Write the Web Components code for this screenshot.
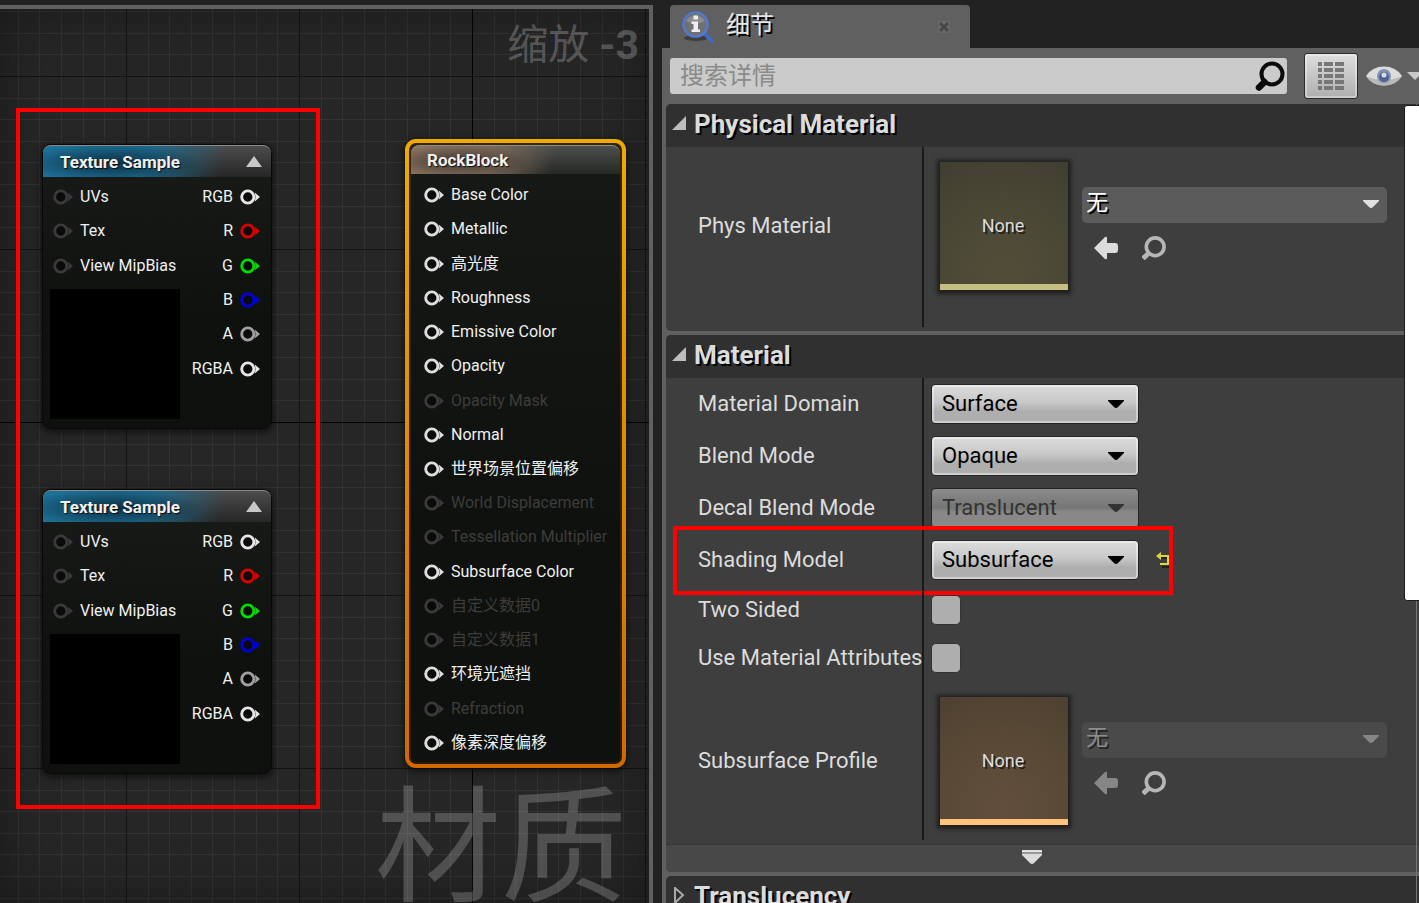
<!DOCTYPE html>
<html lang="zh-CN">
<head>
<meta charset="utf-8">
<title>材质编辑器</title>
<style>
    html, body { height: 100%; }
    body {
        margin: 0;
        overflow: hidden;
        background: #222;
        color: #dcdcdc;
        font-family: Roboto, "Noto Sans CJK SC", sans-serif;
    }
</style>
</head>
<body>
<material-editor>
    <graph-canvas slot="graph" zoom="-3" kind="材质">
        <graph-node class="first" heading="Texture Sample" preview>
            <graph-pin slot="inputs" off>UVs</graph-pin>
            <graph-pin slot="inputs" off>Tex</graph-pin>
            <graph-pin slot="inputs" off>View MipBias</graph-pin>
            <graph-pin slot="outputs" output color="#e6e6e6">RGB</graph-pin>
            <graph-pin slot="outputs" output color="#dc0000">R</graph-pin>
            <graph-pin slot="outputs" output color="#00dc00">G</graph-pin>
            <graph-pin slot="outputs" output color="#0000dc">B</graph-pin>
            <graph-pin slot="outputs" output color="#a0a0a0">A</graph-pin>
            <graph-pin slot="outputs" output color="#e6e6e6">RGBA</graph-pin>
        </graph-node>
        <graph-node class="second" heading="Texture Sample" preview>
            <graph-pin slot="inputs" off>UVs</graph-pin>
            <graph-pin slot="inputs" off>Tex</graph-pin>
            <graph-pin slot="inputs" off>View MipBias</graph-pin>
            <graph-pin slot="outputs" output color="#e6e6e6">RGB</graph-pin>
            <graph-pin slot="outputs" output color="#dc0000">R</graph-pin>
            <graph-pin slot="outputs" output color="#00dc00">G</graph-pin>
            <graph-pin slot="outputs" output color="#0000dc">B</graph-pin>
            <graph-pin slot="outputs" output color="#a0a0a0">A</graph-pin>
            <graph-pin slot="outputs" output color="#e6e6e6">RGBA</graph-pin>
        </graph-node>
        <graph-node class="result" heading="RockBlock" selected>
            <graph-pin slot="inputs">Base Color</graph-pin>
            <graph-pin slot="inputs">Metallic</graph-pin>
            <graph-pin slot="inputs">高光度</graph-pin>
            <graph-pin slot="inputs">Roughness</graph-pin>
            <graph-pin slot="inputs">Emissive Color</graph-pin>
            <graph-pin slot="inputs">Opacity</graph-pin>
            <graph-pin slot="inputs" off dim>Opacity Mask</graph-pin>
            <graph-pin slot="inputs">Normal</graph-pin>
            <graph-pin slot="inputs">世界场景位置偏移</graph-pin>
            <graph-pin slot="inputs" off dim>World Displacement</graph-pin>
            <graph-pin slot="inputs" off dim>Tessellation Multiplier</graph-pin>
            <graph-pin slot="inputs">Subsurface Color</graph-pin>
            <graph-pin slot="inputs" off dim>自定义数据0</graph-pin>
            <graph-pin slot="inputs" off dim>自定义数据1</graph-pin>
            <graph-pin slot="inputs">环境光遮挡</graph-pin>
            <graph-pin slot="inputs" off dim>Refraction</graph-pin>
            <graph-pin slot="inputs">像素深度偏移</graph-pin>
        </graph-node>
    </graph-canvas>

    <details-panel slot="details" heading="细节">
        <detail-section heading="Physical Material" open>
            <property-row label="Phys Material" type="asset" value="无"></property-row>
            <property-spacer></property-spacer>
        </detail-section>
        <detail-section heading="Material" open more>
            <property-row label="Material Domain" type="select" value="Surface"></property-row>
            <property-row label="Blend Mode" type="select" value="Opaque"></property-row>
            <property-row label="Decal Blend Mode" type="select" value="Translucent" disabled></property-row>
            <property-row label="Shading Model" type="select" value="Subsurface" changed marked></property-row>
            <property-row label="Two Sided" type="check"></property-row>
            <property-row label="Use Material Attributes" type="check"></property-row>
            <property-row label="Subsurface Profile" type="asset" value="无" tint="orange" disabled></property-row>
        </detail-section>
        <detail-section heading="Translucency"></detail-section>
    </details-panel>
</material-editor>

<script>
// material-editor: the graph on the left, the details on the right

class MaterialEditor extends HTMLElement {
    constructor() {
        super();
        this.attachShadow({ mode: 'open' });
        this.shadowRoot.innerHTML = `
            <style>
                :host {
                    display: grid;
                    grid-template-columns: minmax(0, 653fr) minmax(0, 757fr);
                    column-gap: 9px;
                    height: 100vh;
                    padding-top: 5px;
                    box-sizing: border-box;
                    overflow: hidden;
                }
            </style>
            <slot name="graph"></slot>
            <slot name="details"></slot>
        `;
    }
}

// graph-canvas

class GraphCanvas extends HTMLElement {
    connectedCallback() {
        this.attachShadow({ mode: 'open' });

        // one major cell is 173px, split in eight
        const minor = [22, 43, 65, 86, 108, 130, 151]
            .map(p => `<path d="M${p} 0h1v173h-1zM0 ${p}h173v1H0z"/>`)
            .join('');

        this.shadowRoot.innerHTML = `
            <style>
                :host {
                    display: block;
                    position: relative;
                    overflow: hidden;
                    border-top: 4px solid #606060;
                    border-right: 4px solid #606060;
                    background: #262626;
                }
                .grid {
                    position: absolute;
                    inset: 0;
                    width: 100%;
                    height: 100%;
                }
                .shade {
                    position: absolute;
                    inset: 0;
                    box-shadow: inset 0 0 60px rgba(0, 0, 0, 0.35);
                }
                .zoom, .kind {
                    position: absolute;
                    color: rgba(255, 255, 255, 0.24);
                    white-space: nowrap;
                }
                .zoom {
                    top: 9px;
                    right: 10px;
                    font-size: 41px;
                    line-height: 54px;
                }
                .kind {
                    right: 22px;
                    top: 765px;
                    font-size: 126px;
                    line-height: 150px;
                    color: rgba(255, 255, 255, 0.2);
                }
                ::slotted(graph-node) { position: absolute; }
                ::slotted(.first) { left: 42px; top: 135px; width: 230px; }
                ::slotted(.second) { left: 42px; top: 480px; width: 230px; }
                ::slotted(.result) { left: 405px; top: 130px; width: 221px; }
                .frame {
                    position: absolute;
                    left: 16px;
                    top: 99px;
                    width: 296px;
                    height: 693px;
                    border: 4px solid #f00;
                    pointer-events: none;
                }
            </style>
            <svg class="grid" aria-hidden="true">
                <defs>
                    <pattern id="cells" x="126" y="67" width="173" height="173" patternUnits="userSpaceOnUse">
                        <g fill="#323232">${minor}</g>
                        <path fill="#141414" d="M0 0h1v173H0zM0 0h173v1H0z"/>
                    </pattern>
                </defs>
                <rect width="100%" height="100%" fill="url(#cells)"/>
                <rect x="472" width="1" height="100%" fill="#000"/>
                <rect y="413" width="100%" height="1" fill="#000"/>
            </svg>
            <div class="shade"></div>
            <div class="zoom">缩放 <b>${this.getAttribute('zoom')}</b></div>
            <div class="kind">${this.getAttribute('kind')}</div>
            <slot></slot>
            <div class="frame"></div>
        `;
    }
}

// graph-node

class GraphNode extends HTMLElement {
    connectedCallback() {
        this.attachShadow({ mode: 'open' });
        const preview = this.hasAttribute('preview');
        this.shadowRoot.innerHTML = `
            <style>
                :host {
                    display: block;
                    box-sizing: border-box;
                    border: 1px solid #080808;
                    border-radius: 9px;
                    background: linear-gradient(rgba(25, 27, 24, 0.97), rgba(14, 16, 13, 0.97) 60%);
                    box-shadow: 0 2px 7px 1px rgba(0, 0, 0, 0.6);
                    color: #f0f0f0;
                    font-size: 16px;
                }
                :host([selected]) {
                    border: 4px solid transparent;
                    border-radius: 11px;
                    padding: 2px;
                    background:
                        linear-gradient(#171917, #0f110e 60%) content-box,
                        linear-gradient(#33270f, #2b1a08) padding-box,
                        linear-gradient(#f0aa00, #cf6900) border-box;
                }
                header {
                    display: flex;
                    align-items: center;
                    justify-content: space-between;
                    height: 32px;
                    box-sizing: border-box;
                    padding: 0 8px 0 17px;
                    border-top: 1px solid #8c8c8c;
                    border-radius: 8px 8px 0 0;
                    background:
                        radial-gradient(ellipse 40% 60% at 30% 55%, rgba(6, 26, 38, 0.75), transparent),
                        linear-gradient(105deg, #1d7199 0%, #1d6a8f 45%, transparent 78%),
                        linear-gradient(#4c4c4c, #262626);
                    font-size: 17px;
                    font-weight: bold;
                    line-height: 20px;
                    text-shadow: 1px 1px 1px rgba(0, 0, 0, 0.8);
                }
                :host([selected]) header {
                    height: 29px;
                    padding-left: 16px;
                    background:
                        radial-gradient(ellipse 35% 60% at 22% 55%, rgba(50, 42, 36, 0.8), transparent),
                        linear-gradient(105deg, #8e7863 0%, #7c6a5a 38%, transparent 68%),
                        linear-gradient(#4c4f4c, #262826);
                }
                .body {
                    display: flex;
                    justify-content: space-between;
                    padding: 3px 11px 8px 10px;
                    height: 240px;
                }
                .inputs, .outputs {
                    display: grid;
                    grid-auto-rows: 1fr;
                }
                .inputs { height: 103px; }
                .outputs { height: 206px; }
                :host([selected]) .body {
                    height: 583px;
                    padding: 4px 10px 1px 13px;
                }
                :host([selected]) .inputs { height: 582px; }
                .preview {
                    width: 130px;
                    height: 130px;
                    margin: 6px 0 0 -3px;
                    background: #000;
                }
                button {
                    display: flex;
                    padding: 0;
                    border: 0;
                    background: none;
                }
            </style>
            <header>
                <span>${this.getAttribute('heading')}</span>
                ${preview ? `<button aria-label="collapse">
                    <svg width="18" height="14" viewBox="0 0 18 14"><path d="M9 1l8 11H1z" fill="#c8c8c8"/></svg>
                </button>` : ''}
            </header>
            <div class="body">
                <div>
                    <div class="inputs"><slot name="inputs"></slot></div>
                    ${preview ? '<div class="preview"></div>' : ''}
                </div>
                <div class="outputs"><slot name="outputs"></slot></div>
            </div>
        `;
    }
}

// graph-pin

class GraphPin extends HTMLElement {
    connectedCallback() {
        this.attachShadow({ mode: 'open' });
        const off = this.hasAttribute('off');
        const color = this.getAttribute('color') || (off ? '#3a3a3a' : '#dedede');
        this.shadowRoot.innerHTML = `
            <style>
                :host {
                    display: flex;
                    align-items: center;
                    gap: 7px;
                    font-size: 16px;
                    line-height: 20px;
                    white-space: nowrap;
                    color: #f0f0f0;
                }
                :host([output]) { flex-direction: row-reverse; }
                :host([dim]) { color: #3c3d3b; }
                svg { flex: none; }
            </style>
            <svg width="20" height="16" viewBox="0 0 20 16" aria-hidden="true">
                <circle cx="7.8" cy="8" r="6.1" fill="#0a0a0a" stroke="${color}" stroke-width="2.9"/>
                <path d="M14.8 3.6L20 8l-5.200 4.400q1.600-4.400 0-8.800z" fill="${color}"/>
            </svg>
            <span><slot></slot></span>
        `;
    }
}

// details-panel

class DetailsPanel extends HTMLElement {
    connectedCallback() {
        this.attachShadow({ mode: 'open' });
        this.shadowRoot.innerHTML = `
            <style>
                :host {
                    display: flex;
                    flex-direction: column;
                    min-height: 0;
                    overflow: hidden;
                }
                .tab {
                    display: flex;
                    align-items: center;
                    width: 300px;
                    height: 43px;
                    margin-left: 8px;
                    padding: 0 19px 0 11px;
                    box-sizing: border-box;
                    border-radius: 4px 4px 0 0;
                    background: #606060;
                    font-size: 24px;
                    line-height: 32px;
                    color: #e6e6e6;
                    text-shadow: 2px 2px 0 #000;
                }
                .tab span {
                    flex: 1;
                    padding: 0 0 4px 11px;
                }
                .main {
                    flex: 1;
                    display: flex;
                    flex-direction: column;
                    min-height: 0;
                    background: #606060;
                }
                .tools {
                    display: flex;
                    align-items: center;
                    height: 56px;
                    padding-left: 8px;
                    flex: none;
                }
                .search {
                    flex: 1;
                    display: flex;
                    align-items: center;
                    height: 36px;
                    border-radius: 3px;
                    background: #cbcbcb;
                }
                input {
                    flex: 1;
                    min-width: 0;
                    height: 36px;
                    padding: 0 10px;
                    border: 0;
                    outline: 0;
                    background: none;
                    font: inherit;
                    font-size: 24px;
                    color: #111;
                }
                input::placeholder { color: #8a8a8a; opacity: 1; }
                button {
                    display: flex;
                    align-items: center;
                    justify-content: center;
                    padding: 0;
                    border: 0;
                    background: none;
                }
                .matrix {
                    width: 54px;
                    height: 46px;
                    margin: 0 8px 0 17px;
                    border: 1px solid #2c2c2c;
                    border-radius: 3px;
                    background: linear-gradient(#dedede, #aeaeae);
                    box-shadow: inset 0 0 0 2px rgba(255, 255, 255, 0.35);
                }
                .eye { gap: 5px; }
                .list {
                    position: relative;
                    flex: 1;
                    min-height: 0;
                    padding-left: 4px;
                    overflow: hidden;
                }
                .track {
                    position: absolute;
                    top: 0;
                    bottom: 0;
                    right: 2px;
                    width: 1px;
                    background: #777;
                }
                .thumb {
                    position: absolute;
                    top: 1px;
                    right: -3px;
                    width: 16px;
                    height: 494px;
                    border: 1px solid #1c1c1c;
                    border-radius: 3px;
                    background: #fff;
                }
            </style>
            <div class="tab">
                <svg width="34" height="34" viewBox="0 0 34 34" aria-hidden="true">
                    <ellipse cx="15" cy="28" rx="12" ry="3" fill="#000" opacity=".35"/>
                    <path d="M22 22l9 9" stroke="#4169bd" stroke-width="4" stroke-linecap="round"/>
                    <circle cx="14.500" cy="14.500" r="12" fill="#707070" stroke="#5379c6" stroke-width="2.600"/>
                    <path d="M5 11a11 11 0 0 1 19 0q-9 5-19 0z" fill="#999" opacity=".7"/>
                    <path d="M12.500 5.500h4.500v4h-4.500zM10.500 11.500H17v8h2v2.500h-8.500v-2.500h2V14h-2z" fill="#eee"/>
                </svg>
                <span>${this.getAttribute('heading')}</span>
                <button aria-label="close">
                    <svg width="14" height="14" viewBox="0 0 14 14"><path d="M1 1h12v12H1z" fill="#686868"/><path d="M3 3l8 8M11 3l-8 8" stroke="#454545" stroke-width="2.500"/></svg>
                </button>
            </div>
            <div class="main">
                <div class="tools">
                    <div class="search">
                        <input type="text" placeholder="搜索详情" aria-label="搜索详情">
                        <button aria-label="search">
                            <svg width="34" height="34" viewBox="0 0 34 34">
                                <circle cx="19" cy="15" r="10.500" fill="none" stroke="#0a0a0a" stroke-width="4"/>
                                <path d="M11.500 23L6 28.500" stroke="#0a0a0a" stroke-width="6.500" stroke-linecap="round"/>
                            </svg>
                        </button>
                    </div>
                    <button class="matrix" aria-label="property matrix">
                        <svg width="28" height="30" viewBox="0 0 28 30" fill="#777">
                            <path d="M1 1h4v4H1zM7 1h9v4H7zM18 1h9v4h-9zM1 7h4v4H1zM7 7h9v4H7zM18 7h9v4h-9zM1 13h4v4H1zM7 13h9v4H7zM18 13h9v4h-9zM1 19h4v4H1zM7 19h9v4H7zM18 19h9v4h-9zM1 25h4v4H1zM7 25h9v4H7zM18 25h9v4h-9z"/>
                        </svg>
                    </button>
                    <button class="eye" aria-label="view options">
                        <svg width="36" height="22" viewBox="0 0 36 22">
                            <path d="M0 11Q6 1.500 18 1.500T36 11Q30 20.500 18 20.500T0 11z" fill="#dcdcdc"/>
                            <path d="M0 11Q6 20.500 18 20.500T36 11q-8 4-18 4T0 11z" fill="#b8b8b8"/>
                            <circle cx="18" cy="11" r="7" fill="#8292b2"/>
                            <circle cx="18" cy="12" r="5" fill="#4e638f"/>
                            <circle cx="18" cy="10" r="2.500" fill="#d5dcea"/>
                        </svg>
                        <svg width="12" height="10" viewBox="0 0 12 10"><path d="M0 1h16L8 9z" fill="#c8c8c8"/></svg>
                    </button>
                </div>
                <div class="list">
                    <slot></slot>
                    <div class="track"></div>
                    <div class="thumb"></div>
                </div>
            </div>
        `;
    }
}

// detail-section

class DetailSection extends HTMLElement {
    connectedCallback() {
        this.attachShadow({ mode: 'open' });
        const open = this.hasAttribute('open');
        const arrow = open
            ? '<path d="M15 1v14H1z" fill="#bdbdbd"/>'
            : '<path d="M4 1l8 7-8 8z" fill="none" stroke="#a8a8a8" stroke-width="2"/>';
        this.shadowRoot.innerHTML = `
            <style>
                :host {
                    display: block;
                    margin-bottom: 4px;
                    border-radius: 5px 0 0 5px;
                    background: #3e3e3e;
                    overflow: hidden;
                }
                h2 {
                    display: flex;
                    align-items: center;
                    gap: 6px;
                    height: 43px;
                    margin: 0;
                    padding: 0 5px 4px;
                    box-sizing: border-box;
                    background: #303030;
                    font-size: 26px;
                    line-height: 32px;
                    text-shadow: 2px 2px 0 #000;
                }
                .rows { padding-bottom: 4px; }
                .more {
                    display: flex;
                    justify-content: center;
                    align-items: center;
                    width: 100%;
                    height: 28px;
                    padding: 0 22px 3px 0;
                    border: 0;
                    border-top: 1px solid #383838;
                    background: #484848;
                }
            </style>
            <h2>
                <svg width="17" height="17" viewBox="0 0 17 17" aria-hidden="true">${arrow}</svg>
                <span>${this.getAttribute('heading')}</span>
            </h2>
            ${open ? '<div class="rows"><slot></slot></div>' : ''}
            ${this.hasAttribute('more') ? `<button class="more" aria-label="advanced">
                <svg width="20" height="16" viewBox="0 0 20 16"><path d="M0 1h20v2H0z" fill="#e0e0e0"/><path d="M0 3h20v2H0z" fill="#999"/><path d="M0 5h20v1l-8 8q-2 2-4 0L0 6z" fill="#dcdcdc"/></svg>
            </button>` : ''}
        `;
    }
}

// property-row: label on the left, its control on the right

class PropertyRow extends HTMLElement {
    connectedCallback() {
        this.attachShadow({ mode: 'open' });
        this.shadowRoot.innerHTML = `
            <style>
                :host {
                    display: grid;
                    grid-template-columns: 34% minmax(0, 1fr);
                    position: relative;
                    height: 52px;
                    font-size: 22px;
                    line-height: 28px;
                }
                :host([type="check"]) { height: 48px; }
                :host([type="asset"]) { height: 158px; }
                label {
                    align-self: center;
                    padding-left: 32px;
                    overflow: hidden;
                    white-space: nowrap;
                }
                .value {
                    display: flex;
                    align-items: center;
                    padding: 0 32px 0 7px;
                    border-left: 2px solid #1a1a1a;
                }
                .combo { position: relative; display: flex; }
                .combo svg {
                    position: absolute;
                    right: 14px;
                    top: 15px;
                    pointer-events: none;
                }
                select {
                    appearance: none;
                    width: 208px;
                    height: 40px;
                    padding: 0 10px;
                    border: 1px solid #252525;
                    border-radius: 4px;
                    background: linear-gradient(#dcdcdc, #c8c8c8 45%, #aeaeae 70%);
                    box-shadow: inset 0 0 0 2px rgba(255, 255, 255, 0.4);
                    font: inherit;
                    color: #000;
                    opacity: 1;
                }
                select:disabled {
                    background: linear-gradient(#8a8a8a, #767676 50%, #888 60%);
                    box-shadow: none;
                    color: #333;
                }
                input {
                    appearance: none;
                    width: 30px;
                    height: 30px;
                    margin: 0;
                    border: 1px solid #333;
                    border-radius: 5px;
                    background: #aeaeae;
                }
                button {
                    display: flex;
                    padding: 0;
                    border: 0;
                    background: none;
                }
                .reset { margin-left: 16px; }
                .thumb {
                    display: flex;
                    align-items: center;
                    justify-content: center;
                    flex: none;
                    width: 128px;
                    height: 128px;
                    box-sizing: border-box;
                    margin: 0 14px 0 9px;
                    padding: 6px 2px 0 0;
                    border-bottom: 6px solid #c6be7f;
                    background: radial-gradient(circle at 50% 90%, #524d39, #4a4835 50%, #403e30);
                    box-shadow: 0 1px 4px 3px rgba(20, 20, 20, 0.75);
                    font-size: 18px;
                    line-height: 24px;
                    text-shadow: 2px 2px 0 rgba(0, 0, 0, 0.6);
                }
                :host([tint="orange"]) .thumb {
                    border-color: #ffc27d;
                    background: radial-gradient(circle at 50% 90%, #614f3c, #5a4936 50%, #4e4131);
                }
                .asset {
                    flex: 1;
                    padding-bottom: 5px;
                }
                .asset select {
                    width: 100%;
                    height: 36px;
                    padding: 0 4px 4px;
                    border: 0;
                    border-radius: 5px;
                    background: #5b5b5b;
                    box-shadow: none;
                    color: #fff;
                    text-shadow: 2px 2px 0 #000;
                }
                .asset select:disabled {
                    background: #4a4a4a;
                    color: #8c8c8c;
                    text-shadow: 2px 2px 0 #222;
                }
                .asset .combo svg { right: 7px; top: 12px; }
                .icons {
                    display: flex;
                    gap: 24px;
                    margin: 13px 0 0 12px;
                }
                .mark {
                    position: absolute;
                    left: 7px;
                    top: -8px;
                    right: 246px;
                    height: 61px;
                    border: 4px solid #f00;
                    pointer-events: none;
                }
            </style>
            <label for="field">${this.getAttribute('label')}</label>
            <div class="value">${this.renderControl()}</div>
            ${this.hasAttribute('marked') ? '<div class="mark"></div>' : ''}
        `;
    }

    renderControl() {
        const disabled = this.hasAttribute('disabled') ? 'disabled' : '';
        const value = this.getAttribute('value');
        switch (this.getAttribute('type')) {
            case 'check':
                return '<input id="field" type="checkbox">';
            case 'asset':
                return `
                    <div class="thumb">None</div>
                    <div class="asset">
                        ${this.renderCombo(value, disabled, disabled ? '#868686' : '#e0e0e0')}
                        <div class="icons">
                            <button aria-label="use selected" ${disabled}>
                                <svg width="24" height="24" viewBox="0 0 24 24"><path d="M0 12L11 1q2-1 2 1v5h8q3 0 3 3v4q0 3-3 3h-8v5q0 2-2 1z" fill="${disabled ? '#868686' : '#dcdcdc'}"/></svg>
                            </button>
                            <button aria-label="browse">
                                <svg width="24" height="24" viewBox="0 0 24 24"><circle cx="13.200" cy="10.800" r="8.900" fill="none" stroke="#b6b6b6" stroke-width="3.600"/><path d="M7 17l-6 5.500" stroke="#b6b6b6" stroke-width="5"/></svg>
                            </button>
                        </div>
                    </div>
                `;
            default:
                return this.renderCombo(value, disabled, disabled ? '#333' : '#000')
                    + (this.hasAttribute('changed') ? `
                    <button class="reset" aria-label="reset">
                        <svg width="18" height="18" viewBox="0 0 18 18"><path d="M4 6h9v9H6" transform="translate(1 1)" fill="none" stroke="#222" stroke-width="2"/><path d="M1 5l5-4v8zM4 4h10v10H5v-2h7V6H4z" fill="#d8d83a"/></svg>
                    </button>` : '');
        }
    }

    renderCombo(value, disabled, color) {
        return `
            <div class="combo">
                <select id="field" ${disabled}><option>${value}</option></select>
                <svg width="18" height="10" viewBox="0 0 18 10" aria-hidden="true"><path d="M1 1h16v1l-6 6q-2 2-4 0L1 2z" fill="${color}"/></svg>
            </div>
        `;
    }
}

// property-spacer: empty row that keeps the column divider going

class PropertySpacer extends HTMLElement {
    constructor() {
        super();
        this.attachShadow({ mode: 'open' });
        this.shadowRoot.innerHTML = `
            <style>
                :host { display: block; height: 22px; padding-left: 34%; }
                div { height: 100%; border-left: 2px solid #1a1a1a; }
            </style>
            <div></div>
        `;
    }
}

customElements.define('material-editor', MaterialEditor);
customElements.define('graph-canvas', GraphCanvas);
customElements.define('graph-node', GraphNode);
customElements.define('graph-pin', GraphPin);
customElements.define('details-panel', DetailsPanel);
customElements.define('detail-section', DetailSection);
customElements.define('property-row', PropertyRow);
customElements.define('property-spacer', PropertySpacer);
</script>
</body>
</html>
